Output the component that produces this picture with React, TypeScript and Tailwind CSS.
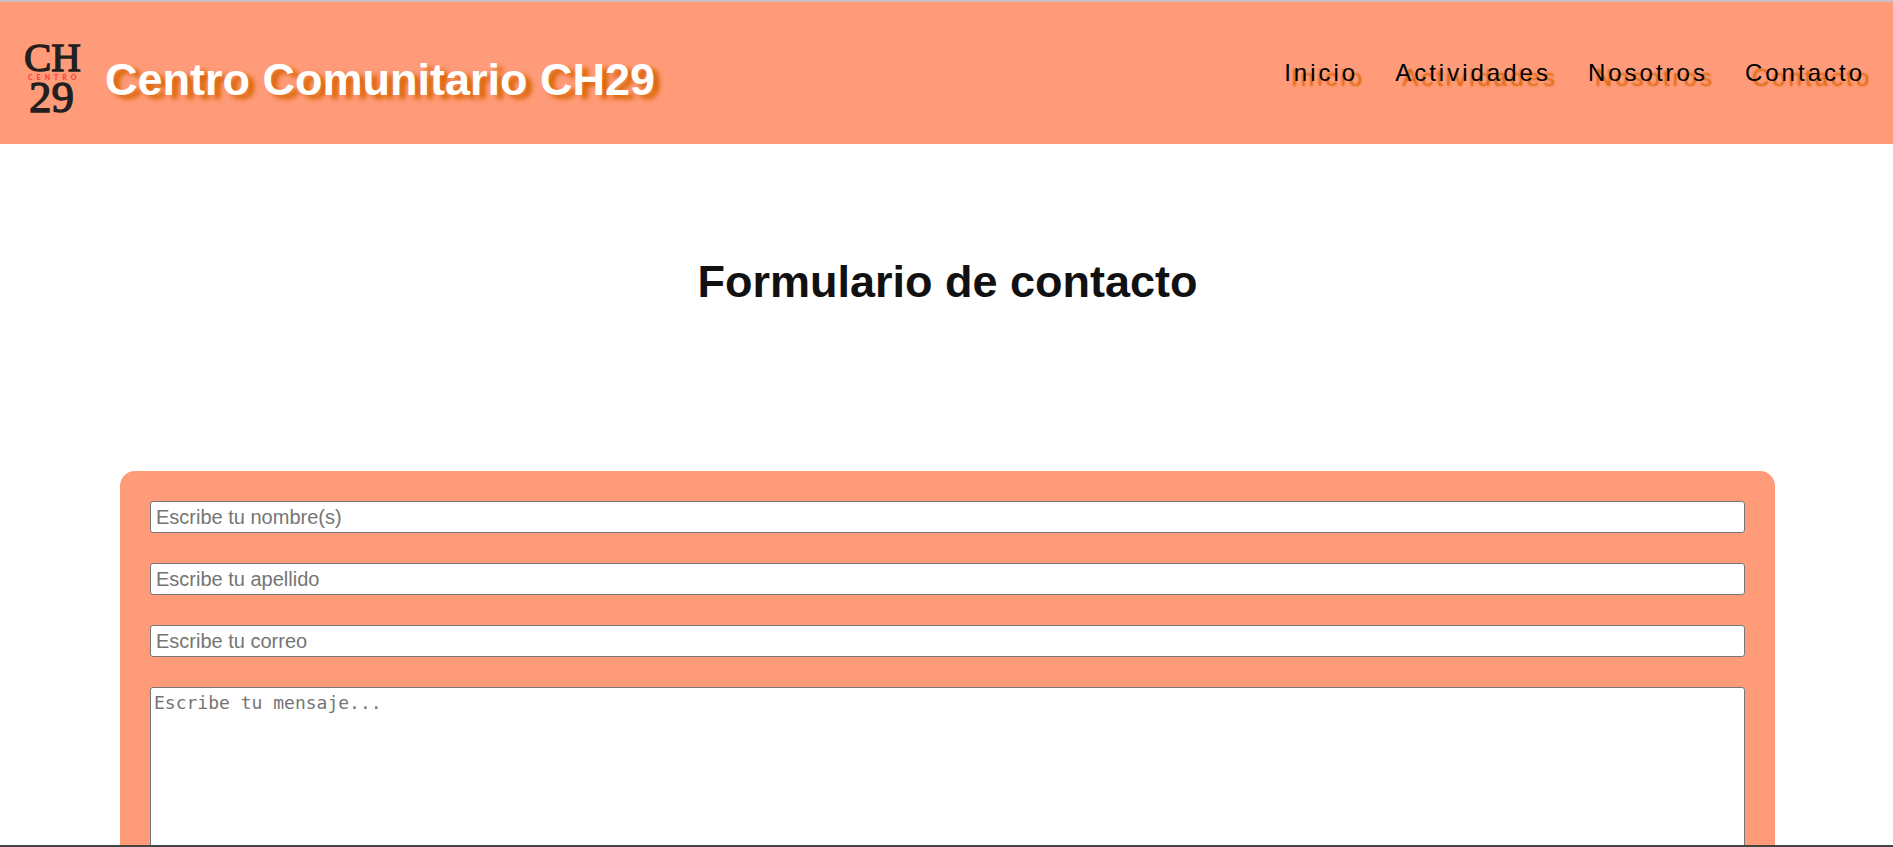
const navLinks = [
  { label: "Inicio", href: "#inicio" },
  { label: "Actividades", href: "#actividades" },
  { label: "Nosotros", href: "#nosotros" },
  { label: "Contacto", href: "#contacto" },
];

const fields = [
  { id: "nombre", type: "text", label: "Escribe tu nombre(s)" },
  { id: "apellido", type: "text", label: "Escribe tu apellido" },
  { id: "correo", type: "email", label: "Escribe tu correo" },
];

function Logo() {
  return (
    <svg
      width="58"
      height="72"
      viewBox="0 0 58 72"
      role="img"
      aria-label="CH29 Centro"
      className="shrink-0 overflow-visible font-['Liberation_Serif',serif]"
    >
      <g fill="#231f20" stroke="#231f20" strokeWidth="1.3">
        <text x="0" y="30" fontSize="41">
          CH
        </text>
        <text x="5" y="71" fontSize="45">
          29
        </text>
      </g>
      <text
        x="4"
        y="39"
        fontSize="7"
        fontWeight="900"
        fill="#ff3b3f"
        letterSpacing="4"
        className="font-['Lato',sans-serif]"
      >
        CENTRO
      </text>
    </svg>
  );
}

function Header() {
  return (
    <header className="flex items-center justify-between bg-[#ff9b78] py-[31px] pr-7 pl-6">
      <div className="flex items-center gap-[23px] pt-2">
        <Logo />
        <h1 className="pt-1.5 text-[45px] leading-[52px] font-bold whitespace-nowrap text-white [text-shadow:6px_4px_5px_#d96200]">
          Centro Comunitario CH29
        </h1>
      </div>
      <nav aria-label="Principal">
        <ul className="flex gap-[37px]">
          {navLinks.map((link) => (
            <li key={link.label}>
              <a
                href={link.href}
                className="text-2xl leading-7 tracking-[3px] text-black [text-shadow:7px_5px_2px_#d96200]"
              >
                {link.label}
              </a>
            </li>
          ))}
        </ul>
      </nav>
    </header>
  );
}

function ContactForm() {
  return (
    <form className="flex flex-col gap-[30px] rounded-[15px] bg-[#ff9b78] p-[30px]">
      {fields.map((field) => (
        <input
          key={field.id}
          id={field.id}
          name={field.id}
          type={field.type}
          aria-label={field.label}
          placeholder={field.label}
          className="h-8 w-full rounded-[3px] border border-[#767676] bg-white px-[5px] text-xl placeholder:text-[#757575]"
        />
      ))}
      <textarea
        id="mensaje"
        name="mensaje"
        rows={10}
        aria-label="Escribe tu mensaje"
        placeholder="Escribe tu mensaje..."
        className="w-full resize-none rounded-[3px] border border-[#767676] bg-white p-[3px] font-['DejaVu_Sans_Mono',monospace] text-lg leading-6 placeholder:text-[#757575]"
      />
    </form>
  );
}

export default function App() {
  return (
    <div className="flex h-screen flex-col overflow-hidden border-t-2 border-b-2 border-t-[#cbbcc5] border-b-[#444444] bg-white font-['Liberation_Sans',Arial,sans-serif]">
      <Header />
      <main className="min-h-0 flex-1 overflow-hidden pr-[118px] pl-[120px]">
        <h2 className="pt-28 pb-[163px] text-center text-[45px] leading-[52px] font-bold text-[#111111]">
          Formulario de contacto
        </h2>
        <ContactForm />
      </main>
    </div>
  );
}
